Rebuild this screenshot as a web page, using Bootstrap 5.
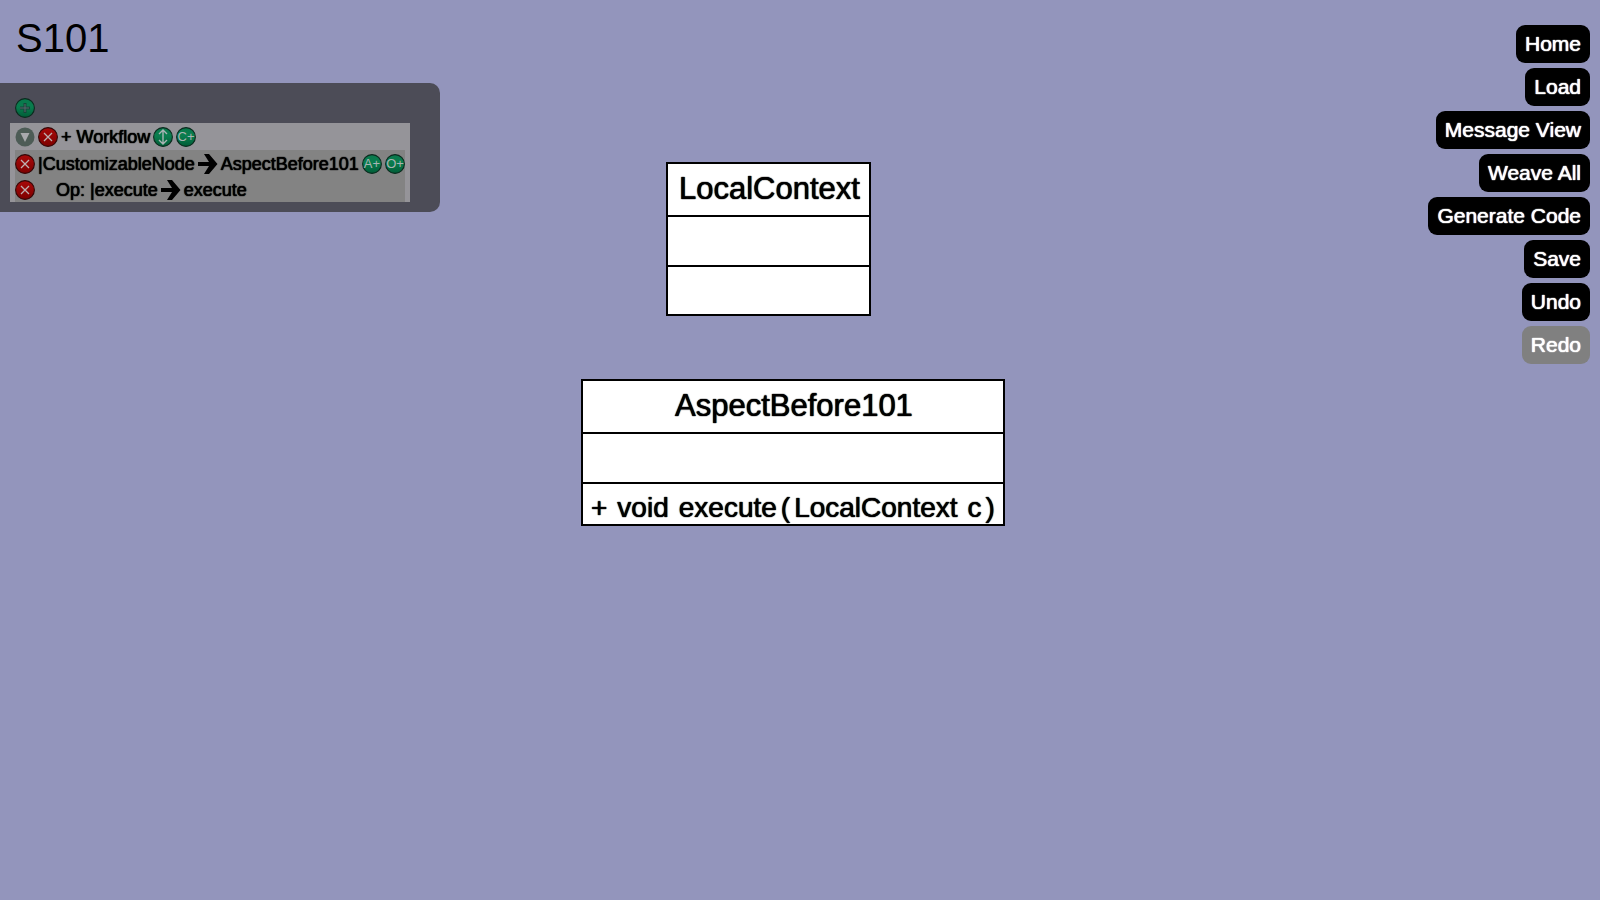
<!DOCTYPE html>
<html lang="en">
<head>
<meta charset="utf-8">
<meta name="viewport" content="width=device-width, initial-scale=1">
<title>S101</title>
<link href="https://cdn.jsdelivr.net/npm/bootstrap@5.3.0/dist/css/bootstrap.min.css" rel="stylesheet">
<style>
  body { background: #9395bc; color: #000; font-family: "Liberation Sans", Arial, sans-serif; }
  .view-title { font-size: 40px; line-height: 46px; font-weight: 400; padding: 15px 16px 0; margin-bottom: 22px; }
  .heavy { text-shadow: 0 0 1px currentColor, 0 0 1px currentColor; }

  .compositions { background: #4c4c57; border-radius: 0 10px 10px 0; padding: 15px 30px 10px 10px; width: fit-content; }
  .composition-card { background: #959499; margin-top: 5px; }
  .mapping-list { background: #838383; margin: 0 5px; padding: 4px 0 2px; gap: 6px; }
  .map-row { font-size: 18px; line-height: 20px; height: 20px; gap: 3px; white-space: nowrap; }
  .composition-head { padding: 4px 5px 3px; height: 27px; }
  .add-row { padding: 0 5px; }
  .op-indent { margin-left: 18px; }
  .round-btn { width: 20px; height: 20px; padding: 0; border: 0; background: none; line-height: 0; flex: none; }
  .round-btn svg, .map-arrow { display: block; }
  .round-btn text { font: 13px "Liberation Sans", Arial, sans-serif; fill: #a9b4b4; text-anchor: middle; }

  .actions { top: 25px; right: 10px; gap: 5px; }
  .action-btn { font-size: 21px; line-height: 24px; padding: 7px 9px; border: 0; border-radius: 9px; background: #000; color: #fff; }
  .action-btn:hover { background: #222; color: #fff; }
  .action-btn:disabled { background: #808080; color: #fff; opacity: 1; }

  .uml-class { background: #fff; border: 2px solid #000; }
  .uml-name { font-size: 31px; line-height: 36px; padding: 7px 9px 8px 11px; height: 51px; font-weight: 400; margin: 0; text-align: center; }
  .uml-part { border-top: 2px solid #000; height: 50px; }
  .uml-part:last-child { height: 49px; }
  .uml-part.uml-ops { height: 42px; font-size: 28px; line-height: 32px; padding: 8px 8px 0; white-space: nowrap; }
  .op-space { margin-right: 10px; }
  .op-paren { margin: 0 4px; }
</style>
<script src="https://cdn.jsdelivr.net/npm/bootstrap@5.3.0/dist/js/bootstrap.bundle.min.js"></script>
</head>
<body>
<svg width="0" height="0" class="position-absolute" aria-hidden="true">
  <defs>
    <linearGradient id="green" x1="0" y1="0" x2="0" y2="1"><stop offset="0" stop-color="#08794c"/><stop offset=".45" stop-color="#0a7d4e"/><stop offset="1" stop-color="#005c37"/></linearGradient>
    <linearGradient id="red" x1="0" y1="0" x2="0" y2="1"><stop offset="0" stop-color="#a80a0a"/><stop offset="1" stop-color="#7d0000"/></linearGradient>
    <symbol id="disc-green" viewBox="0 0 20 20"><circle cx="10" cy="10" r="9.4" fill="url(#green)" stroke="#0c2a1e" stroke-width="1.1"/></symbol>
    <symbol id="icon-delete" viewBox="0 0 20 20"><circle cx="10" cy="10" r="9.4" fill="url(#red)" stroke="#330808" stroke-width="1.1"/><path d="M6 6l8 8M14 6l-8 8" stroke="#bdb0b0" stroke-width="1.3" fill="none"/></symbol>
    <symbol id="icon-arrow" viewBox="0 0 20 20"><path d="M0 8h11L6 0h5l8.500 10L11 20H6l5-8H0z"/></symbol>
  </defs>
</svg>

<main class="position-relative min-vh-100 overflow-hidden">
  <h1 class="view-title">S101</h1>

  <section class="compositions" aria-label="Compositions">
    <div class="add-row d-flex">
      <button type="button" class="round-btn" aria-label="Add composition"><svg width="20" height="20" viewBox="0 0 20 20"><use href="#disc-green"/><path d="M5 10h10M10 5v10" stroke="#17453a" stroke-width="3"/><path d="M5 10h9M10 6v8" stroke="#56696a" stroke-width="1"/></svg></button>
    </div>
    <div class="composition-card">
      <div class="composition-head map-row d-flex align-items-center">
        <button type="button" class="round-btn" aria-label="Collapse"><svg width="20" height="20" viewBox="0 0 20 20"><circle cx="10" cy="10" r="9.500" fill="#4d5c56"/><path d="M5.500 6h9L10 15z" fill="#a9a9ad"/></svg></button>
        <button type="button" class="round-btn" aria-label="Delete composition"><svg width="20" height="20"><use href="#icon-delete"/></svg></button>
        <span class="heavy">+ Workflow</span>
        <button type="button" class="round-btn" aria-label="Extend"><svg width="20" height="20" viewBox="0 0 20 20"><use href="#disc-green"/><path d="M10 3.500v13M6 7l4-4 4 4M6 13l4 4 4-4" stroke="#a9b4b4" stroke-width="1.400" fill="none"/></svg></button>
        <button type="button" class="round-btn" aria-label="Add class mapping"><svg width="20" height="20" viewBox="0 0 20 20"><use href="#disc-green"/><text x="10" y="14">C+</text></svg></button>
      </div>
      <div class="mapping-list d-flex flex-column">
        <div class="map-row d-flex align-items-center">
          <button type="button" class="round-btn" aria-label="Delete class mapping"><svg width="20" height="20"><use href="#icon-delete"/></svg></button>
          <span class="heavy">|CustomizableNode</span>
          <svg class="map-arrow" width="20" height="20" aria-hidden="true"><use href="#icon-arrow"/></svg>
          <span class="heavy">AspectBefore101</span>
          <button type="button" class="round-btn ms-auto" aria-label="Add attribute mapping"><svg width="20" height="20" viewBox="0 0 20 20"><use href="#disc-green"/><text x="10" y="14">A+</text></svg></button>
          <button type="button" class="round-btn" aria-label="Add operation mapping"><svg width="20" height="20" viewBox="0 0 20 20"><use href="#disc-green"/><text x="10" y="14">O+</text></svg></button>
        </div>
        <div class="map-row d-flex align-items-center">
          <button type="button" class="round-btn" aria-label="Delete operation mapping"><svg width="20" height="20"><use href="#icon-delete"/></svg></button>
          <span class="heavy op-indent">Op: |execute</span>
          <svg class="map-arrow" width="20" height="20" aria-hidden="true"><use href="#icon-arrow"/></svg>
          <span class="heavy">execute</span>
        </div>
      </div>
    </div>
  </section>

  <article class="uml-class position-absolute" style="left:666px;top:162px">
    <h2 class="uml-name heavy">LocalContext</h2>
    <div class="uml-part"></div>
    <div class="uml-part"></div>
  </article>

  <article class="uml-class position-absolute" style="left:581px;top:379px">
    <h2 class="uml-name heavy">AspectBefore101</h2>
    <div class="uml-part"></div>
    <div class="uml-part uml-ops heavy d-flex">
      <span class="op-space">+</span><span class="op-space">void</span><span>execute</span><span class="op-paren">(</span><span class="op-space">LocalContext</span><span>c</span><span class="op-paren me-0">)</span>
    </div>
  </article>

  <nav class="actions position-absolute d-flex flex-column align-items-end" aria-label="Actions">
    <button type="button" class="btn action-btn heavy">Home</button>
    <button type="button" class="btn action-btn heavy">Load</button>
    <button type="button" class="btn action-btn heavy">Message View</button>
    <button type="button" class="btn action-btn heavy">Weave All</button>
    <button type="button" class="btn action-btn heavy">Generate Code</button>
    <button type="button" class="btn action-btn heavy">Save</button>
    <button type="button" class="btn action-btn heavy">Undo</button>
    <button type="button" class="btn action-btn heavy" disabled>Redo</button>
  </nav>
</main>
</body>
</html>
